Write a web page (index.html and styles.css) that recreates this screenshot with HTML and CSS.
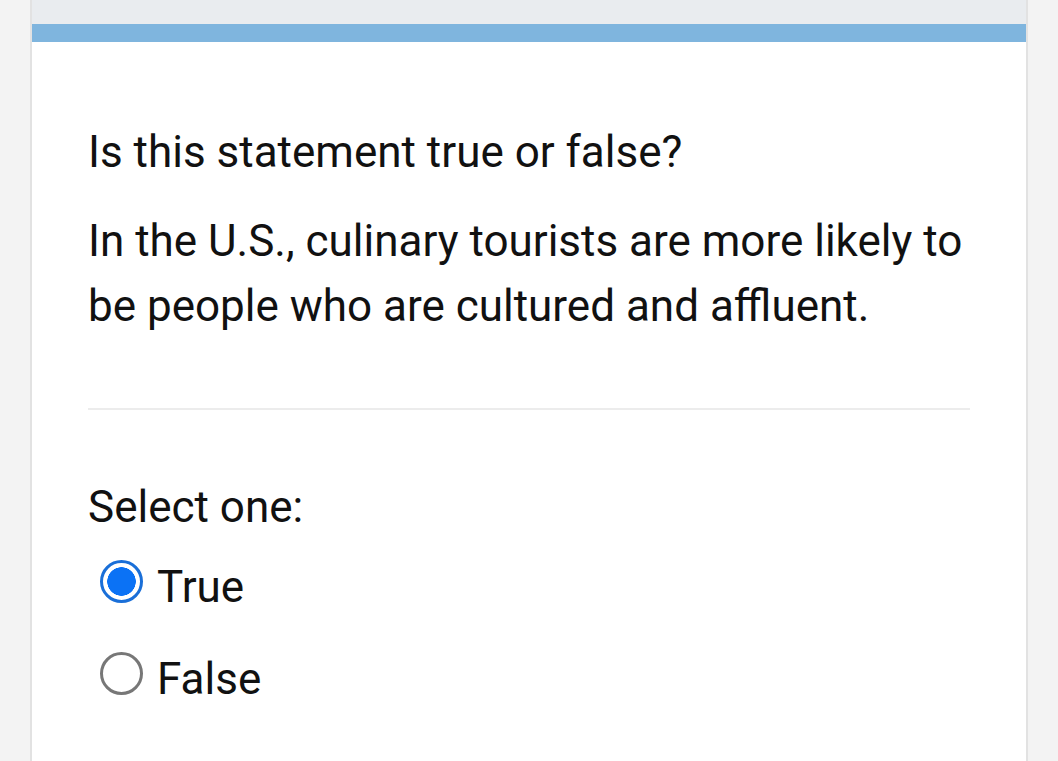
FILE: index.html
```html
<!DOCTYPE html>
<html lang="en">
<head>
    <meta charset="UTF-8">
    <meta name="viewport" content="width=device-width, initial-scale=1.0">
    <title>Question</title>
    <link rel="stylesheet" href="styles.css">
</head>
<body>
    <div class="card">
        <div class="card-top"></div>
        <div class="card-bar"></div>
        <div class="content">
            <p class="qtext">Is this statement true or false?</p>
            <p class="qtext">In the U.S., culinary tourists are more likely to be people who are cultured and affluent.</p>
            <hr class="divider">
            <div class="prompt">Select one:</div>
            <div class="answer">
                <label class="option">
                    <span class="radio checked"></span>
                    <span>True</span>
                </label>
                <label class="option">
                    <span class="radio"></span>
                    <span>False</span>
                </label>
            </div>
        </div>
    </div>
</body>
</html>
```

FILE: styles.css
```css
body {
    margin: 0;
    background-color: #f3f3f3;
    font-family: Roboto, "Noto Sans", Arial, sans-serif;
    color: #111;
    font-size: 44px;
    line-height: 65px;
}
.card {
    margin: 0 30px;
    min-height: 761px;
    background-color: #fff;
    border-left: 2px solid #e2e2e2;
    border-right: 2px solid #e2e2e2;
}
.card-top {
    height: 24px;
    background-color: #e9ecef;
}
.card-bar {
    height: 18px;
    background-color: #7fb5de;
}
.content {
    padding: 78px 56px 0;
}
.qtext {
    margin: 0 0 24px;
}
.divider {
    margin: 69px 0 0;
    border: none;
    border-top: 2px solid #ececec;
}
.prompt {
    margin-top: 65px;
}
.answer {
    display: flex;
    flex-direction: column;
    gap: 27px;
    margin-top: 15px;
}
.option {
    display: flex;
    align-items: center;
    gap: 14px;
    padding-left: 12px;
}
.radio {
    box-sizing: border-box;
    width: 43px;
    height: 43px;
    border: 3px solid #777;
    border-radius: 50%;
    margin-top: -12px;
}
.radio.checked {
    border-color: #1a6fd8;
    background: radial-gradient(circle, #0b72f5 0 14px, #fff 14.5px);
}
```
